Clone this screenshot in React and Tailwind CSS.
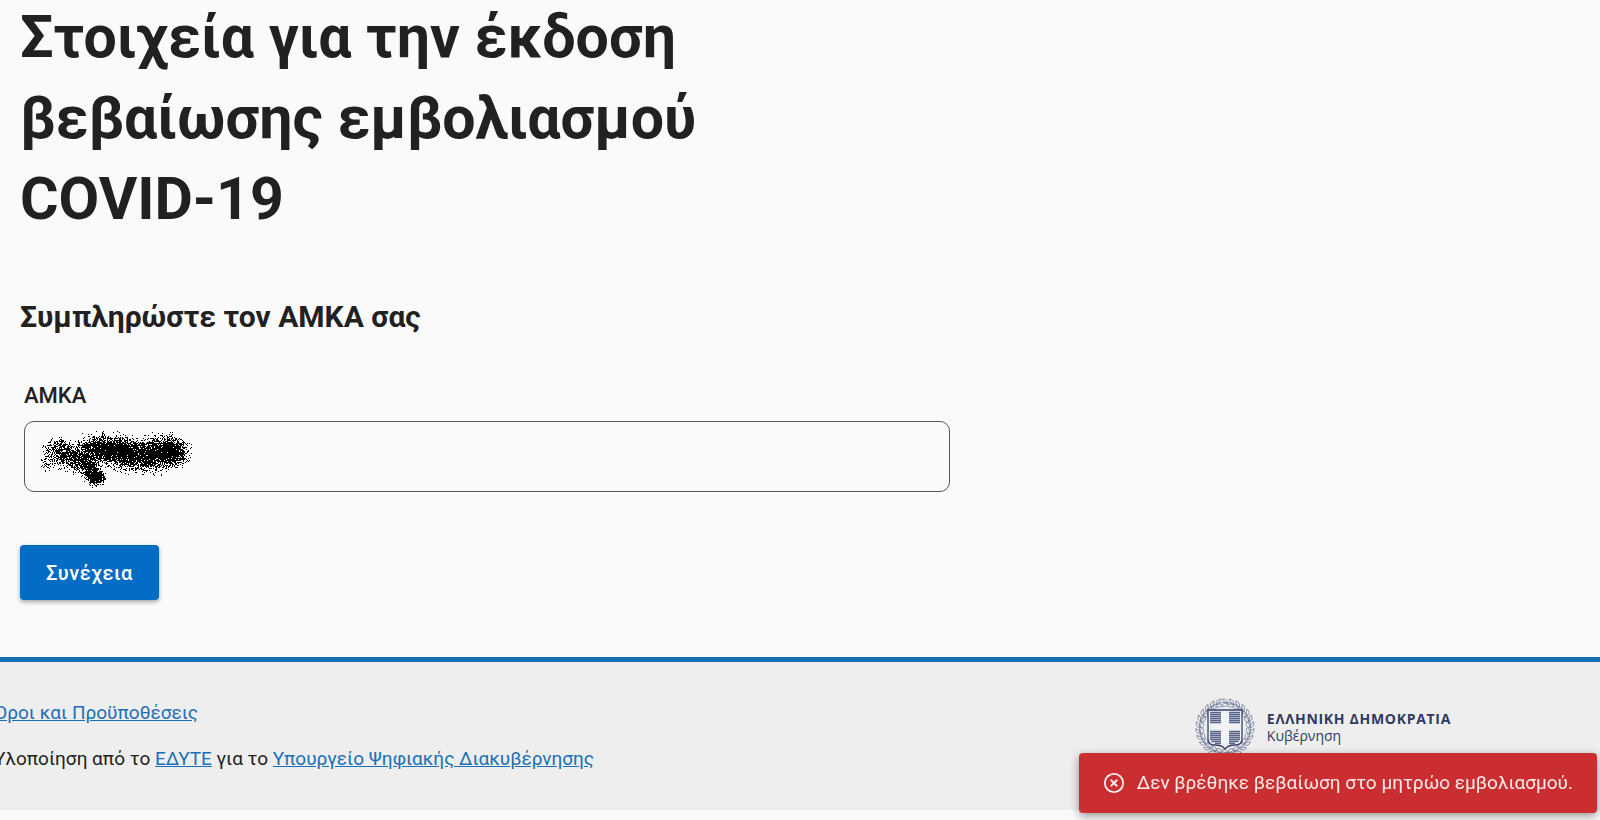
import React from 'react'
import { CircleX } from 'lucide-react'

// stroke of the spray brush that hides the number: [x, y, spread, dots]
const SPRAY_STOPS = [
  [16, 20, 8, 260], [24, 23, 8, 280], [33, 26, 8, 320], [43, 31, 7, 320],
  [50, 38, 6, 300], [56, 46, 5, 420], [50, 20, 9, 420], [60, 18, 9, 620],
  [72, 19, 9, 700], [82, 21, 9, 700], [92, 24, 9, 560], [104, 25, 10, 600],
  [114, 23, 10, 640], [126, 19, 9, 900], [135, 22, 8, 640], [7, 33, 4, 50],
]

function sprayPath() {
  let seed = 7
  const rand = () => {
    seed = (seed * 16807) % 2147483647
    return seed / 2147483647
  }
  const seen = new Set()
  SPRAY_STOPS.forEach(([cx, cy, spread, dots]) => {
    for (let i = 0; i < dots; i++) {
      // gaussian falloff, so the edge thins out into single dots
      const r = spread * 0.75 * Math.sqrt(-2 * Math.log(1 - rand() * 0.99))
      const a = rand() * Math.PI * 2
      seen.add(`${Math.round(cx + r * Math.cos(a))} ${Math.round(cy + r * Math.sin(a))}`)
    }
  })
  return [...seen].map(p => `M${p}h1v1h-1z`).join('')
}

const SPRAY = sprayPath()

function Spray() {
  return (
    <svg className="absolute left-4 top-2.5 pointer-events-none" width="160" height="59" viewBox="0 0 160 59" shapeRendering="crispEdges" aria-hidden="true">
      <path d={SPRAY} fill="#000" />
    </svg>
  )
}

function Emblem() {
  const leaves = Array.from({ length: 26 }, (_, i) => (i * 360) / 26)
  return (
    <svg width="60" height="60" viewBox="0 0 60 60" fill="none" stroke="#6c7594" aria-hidden="true">
      {leaves.map(a => (
        <g key={a} transform={a < 180 ? `rotate(${a} 30 30)` : `rotate(${a} 30 30) translate(60 0) scale(-1 1)`} strokeWidth="0.7">
          <path d="M33 5q-4 0-6-4q5-1 6 4z" />
          <path d="M33 5.500q-5-1-6 2.500q4 2 6-2.500z" />
          <path d="M33 5.300q-3-2-6-0.500" />
        </g>
      ))}
      <path d="M13 12h34v29q0 6-7 6q-7 0-10 4q-3-4-10-4q-7 0-7-6z" fill="#f1f2f5" stroke="#35406b" strokeWidth="1.3" />
      <g stroke="#59638a" strokeWidth="1.3">
        <path d="M15 14.500h11M15 16.500h11M15 18.500h11M15 20.500h11M15 22.500h11M15 24.500h11" />
        <path d="M34 14.500h11M34 16.500h11M34 18.500h11M34 20.500h11M34 22.500h11M34 24.500h11" />
        <path d="M15 33.500h11M15 35.500h11M15 37.500h11M15 39.500h11M15 41.500h11M16.500 43.500h9.500M20 45.500h6" />
        <path d="M34 33.500h11M34 35.500h11M34 37.500h11M34 39.500h11M34 41.500h11M34 43.500h9.500M34 45.500h6" />
      </g>
    </svg>
  )
}

function FooterLink({ children }) {
  return <a href="#" className="text-[#1a70b8] underline">{children}</a>
}

export default function App() {
  return (
    <div className="min-h-screen overflow-x-hidden bg-[#fafafa] font-[Roboto,sans-serif] text-[#212121]">
      <main className="max-w-[950px] pl-5 pb-14">
        <h1 className="-mt-1 max-w-3xl text-[59px] leading-[81px] font-bold">
          Στοιχεία για την έκδοση βεβαίωσης εμβολιασμού COVID-19
        </h1>

        <form onSubmit={e => e.preventDefault()}>
          <h2 className="mt-14 text-[30px] leading-[44px] font-bold">Συμπληρώστε τον ΑΜΚΑ σας</h2>
          <div className="mt-[41px] pl-1">
            <label htmlFor="amka" className="block text-[22px] leading-8 font-medium">ΑΜΚΑ</label>
            <div className="relative mt-[9px]">
              <input id="amka" type="text" className="block h-[71px] w-full rounded-[10px] border border-[#555] bg-transparent px-4 text-xl" />
              <Spray />
            </div>
          </div>
          <button type="submit" className="mt-[53px] h-[55px] rounded bg-[#036cc5] px-[26px] text-xl font-medium tracking-wide text-white shadow-[0_2px_4px_rgba(0,0,0,0.35)]">
            Συνέχεια
          </button>
        </form>
      </main>

      <footer className="mt-px flex items-start justify-between border-t-[5px] border-[#136eb4] bg-[#eee] pt-9 pb-9">
        <div className="-ml-1.5 text-[19px] leading-[30px]">
          <p><FooterLink>Όροι και Προϋποθέσεις</FooterLink></p>
          <p className="mt-4">
            Υλοποίηση από το <FooterLink>ΕΔΥΤΕ</FooterLink> για το <FooterLink>Υπουργείο Ψηφιακής Διακυβέρνησης</FooterLink>
          </p>
        </div>
        <div className="mr-[149px] flex items-start gap-3 font-['Open_Sans',sans-serif] text-[#2f3a60]">
          <Emblem />
          <div className="pt-3 text-sm leading-[17px]">
            <p className="font-bold tracking-wider">ΕΛΛΗΝΙΚΗ ΔΗΜΟΚΡΑΤΙΑ</p>
            <p>Κυβέρνηση</p>
          </div>
        </div>
      </footer>

      <div role="alert" className="fixed right-[3px] bottom-[7px] flex h-[60px] items-center gap-3 rounded bg-[#ca2e30] px-6 text-[19px] text-[#ffeceb] shadow-[0_3px_10px_rgba(0,0,0,0.4)]">
        <CircleX size={22} strokeWidth={2} />
        <span>Δεν βρέθηκε βεβαίωση στο μητρώο εμβολιασμού.</span>
      </div>
    </div>
  )
}
